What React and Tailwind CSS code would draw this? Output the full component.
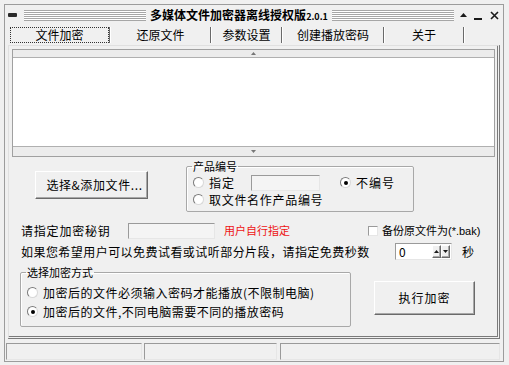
import React from "react";

const font = "font-['Noto_Sans_CJK_SC','Noto_Sans_CJK_JP',sans-serif]";
const groove =
  "h-[11px] flex-1 bg-[repeating-linear-gradient(to_bottom,#a6a6a6_0px,#a6a6a6_1px,#ffffff_1px,#ffffff_2px)]";
const raised =
  "flex items-center justify-center border border-t-white border-l-white border-r-[#6a6a6a] border-b-[#6a6a6a] bg-[#f0f0f0] shadow-[inset_-1px_-1px_0_#a8a8a8]";
const sunken = "border border-t-[#9a9a9a] border-l-[#9a9a9a] border-r-[#e6e6e6] border-b-[#e6e6e6]";

function Radio({ checked }) {
  return (
    <span className="flex h-[11px] w-[11px] shrink-0 items-center justify-center rounded-full border border-t-[#7a7a7a] border-l-[#7a7a7a] border-r-[#d8d8d8] border-b-[#d8d8d8] bg-white">
      {checked && <span className="h-[4px] w-[4px] rounded-full bg-black" />}
    </span>
  );
}

function Group({ title, className, children }) {
  return (
    <fieldset className={`rounded-[2px] border border-[#a8a8a8] shadow-[inset_1px_1px_0_#ffffff] ${className}`}>
      <legend className="ml-[5px] px-[1px] text-[11px] leading-[11px]">{title}</legend>
      {children}
    </fieldset>
  );
}

function Tri({ down, color = "#1a1a1a", w = 7, h = 4 }) {
  return (
    <svg width={w} height={h} viewBox="0 0 7 4">
      <path d={down ? "M0 0H7L3.5 4Z" : "M0 4H7L3.5 0Z"} fill={color} />
    </svg>
  );
}

const tabs = [
  { label: "文件加密", w: "w-[101px]" },
  { label: "还原文件", w: "w-[101px]" },
  { label: "参数设置", w: "w-[71px]" },
  { label: "创建播放密码", w: "w-[102px]" },
  { label: "关于", w: "w-[80px]" },
];

export default function App() {
  return (
    <div className={`${font} h-[365px] w-[509px] bg-[#f0f0f0] p-[4px] text-[12px] leading-none text-black`}>
      <div className="flex h-[358px] w-[500px] flex-col border border-[#9c9c9c] bg-[#f0f0f0]">
        {/* title bar */}
        <div className="flex h-[20px] items-center pl-[3px] pr-[4px]">
          <span className="h-[4px] w-[9px] rounded-[1px] bg-[#2a2a2a]" />
          <span className={`ml-[7px] ${groove}`} />
          <span className="mx-[4px] flex items-baseline text-[12px] font-bold">
            多媒体文件加密器离线授权版<span className="text-[9px]">2.0.1</span>
          </span>
          <span className={`mr-[4px] ${groove}`} />
          <span className="ml-[1px] flex w-[8px] justify-center">
            <Tri />
          </span>
          <span className="ml-[7px] mt-[8px] h-[2px] w-[8px] bg-[#1a1a1a]" />
          <svg className="ml-[8px]" width="9" height="9" viewBox="0 0 9 9">
            <path d="M1 1L8 8M8 1L1 8" stroke="#1a1a1a" strokeWidth="1.6" />
          </svg>
        </div>

        {/* tabs */}
        <div className="flex h-[20px] pl-[5px]">
          {tabs.map((t, i) => (
            <div key={t.label} className={`${t.w} flex shrink-0 items-stretch py-[2px]`}>
              <div
                className={`flex flex-1 items-center justify-center ${
                  i === 0 ? "border border-dotted border-[#333]" : ""
                }`}
              >
                {t.label}
              </div>
              <span className="w-[1px] bg-[#6a6a6a]" />
              <span className="w-[1px] bg-white" />
            </div>
          ))}
        </div>

        {/* panel */}
        <div className="ml-[3px] flex h-[294px] w-[492px] flex-col border-[3px] border-double border-t-[1px] border-l-[1px] border-t-[#e0e0e0] border-l-[#e0e0e0] border-r-[#7a7a7a] border-b-[#7a7a7a]">
          {/* list box */}
          <div className="ml-[3px] mr-[2px] mt-[3px] flex h-[108px] flex-col border border-[#a0a0a0]">
            <div className="flex h-[8px] items-center justify-center border-b border-[#b0b0b0] bg-[#ececec]">
              <Tri color="#777" w={5} h={3} />
            </div>
            <div className="flex-1 bg-white" />
            <div className="flex h-[10px] items-center justify-center border-t border-[#b0b0b0] bg-[#ececec]">
              <Tri down color="#777" w={5} h={3} />
            </div>
          </div>

          {/* row: add file + product number */}
          <div className="mt-[2px] flex items-start">
            <div className={`${raised} ml-[26px] mt-[12px] h-[28px] w-[113px] tracking-[0.6px]`}>
              <span className="ml-[6px]">选择&amp;添加文件...</span>
            </div>
            <Group title="产品编号" className="ml-[38px] mt-[2px] h-[51px] w-[228px]">
              <div className="mt-[3px] flex h-[15px] items-center pl-[6px]">
                <Radio />
                <span className="ml-[5px] w-[37px] tracking-[1px]">指定</span>
                <span className={`${sunken} ml-[5px] h-[16px] w-[69px] bg-[#f4f4f4]`} />
                <span className="ml-[20px]">
                  <Radio checked />
                </span>
                <span className="ml-[5px] tracking-[1px]">不编号</span>
              </div>
              <div className="mt-[2px] flex h-[15px] items-center pl-[6px]">
                <Radio />
                <span className="ml-[5px] tracking-[0.7px]">取文件名作产品编号</span>
              </div>
            </Group>
          </div>

          {/* row: key */}
          <div className="mt-[10px] flex h-[17px] items-center">
            <span className="ml-[12px] w-[107px] tracking-[0.8px]">请指定加密秘钥</span>
            <span className={`${sunken} h-[16px] w-[87px] bg-[#f4f4f4]`} />
            <span className="ml-[9px] w-[144px] text-[11px] text-[#ee1414]">用户自行指定</span>
            <span className={`${sunken} h-[10px] w-[10px] bg-white`} />
            <span className="ml-[4px] text-[11px]">
              备份原文件为<span className="font-['Liberation_Sans',sans-serif]">(*.bak)</span>
            </span>
          </div>

          {/* row: free seconds */}
          <div className="mt-[4px] flex h-[17px] items-center">
            <span className="ml-[12px] w-[374px] tracking-[0.45px]">
              如果您希望用户可以免费试看或试听部分片段，请指定免费秒数
            </span>
            <span className={`${sunken} flex h-[17px] w-[57px] items-center bg-white pl-[3px]`}>
              <span className="flex-1">0</span>
              <span className="mr-[1px] flex h-[13px] items-stretch">
                <span className={`${raised} w-[9px]`}>
                  <Tri w={5} h={3} />
                </span>
                <span className={`${raised} w-[9px]`}>
                  <Tri down w={5} h={3} />
                </span>
              </span>
            </span>
            <span className="ml-[10px]">秒</span>
          </div>

          {/* row: mode + run */}
          <div className="mt-[7px] flex items-start">
            <Group title="选择加密方式" className="ml-[11px] h-[60px] w-[331px]">
              <div className="mt-[6px] flex h-[17px] items-center pl-[6px]">
                <Radio />
                <span className="ml-[5px] tracking-[0.5px]">加密后的文件必须输入密码才能播放(不限制电脑)</span>
              </div>
              <div className="mt-[2px] flex h-[17px] items-center pl-[6px]">
                <Radio checked />
                <span className="ml-[5px] tracking-[0.5px]">加密后的文件,不同电脑需要不同的播放密码</span>
              </div>
            </Group>
            <div className={`${raised} ml-[23px] mt-[14px] h-[34px] w-[101px] tracking-[1px]`}>执行加密</div>
          </div>
        </div>

        {/* status bar */}
        <div className="mt-[4px] flex h-[17px]">
          <span className={`${sunken} ml-[1px] w-[136px]`} />
          <span className={`${sunken} ml-[2px] w-[133px]`} />
          <span className={`${sunken} ml-[3px] w-[220px]`} />
        </div>
      </div>
    </div>
  );
}
